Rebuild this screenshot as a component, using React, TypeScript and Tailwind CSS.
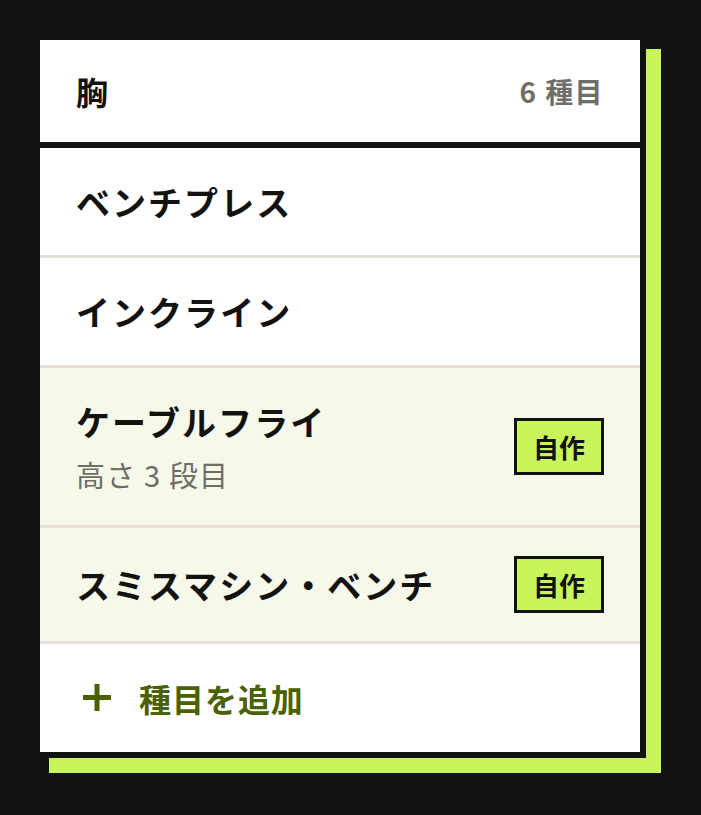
import React from 'react';

type Exercise = {
  name: string;
  note?: string;
  custom?: boolean;
};

const exercises: Exercise[] = [
  { name: 'ベンチプレス' },
  { name: 'インクライン' },
  { name: 'ケーブルフライ', note: '高さ 3 段目', custom: true },
  { name: 'スミスマシン・ベンチ', custom: true },
];

const font = { fontFamily: '"Noto Sans CJK JP", "Noto Sans", sans-serif' };

const PlusIcon = () => (
  <svg width="32" height="32" viewBox="0 0 32 32" className="text-[#4a6100]">
    <path d="M16 2v27M2 15.5h28" stroke="currentColor" strokeWidth="5" fill="none" />
  </svg>
);

export default function App() {
  return (
    <div className="min-h-[815px] bg-[#121210] p-[34px]" style={font}>
      <div className="w-[612px] border-[6px] border-[#121210] bg-white shadow-[15px_15px_0_0_#c8f55c]">
        <div className="flex h-[108px] items-center justify-between border-b-[6px] border-[#121210] px-9">
          <span className="text-[32px] font-bold text-[#121210]">胸</span>
          <span className="text-[28px] font-bold tracking-[0.05em] text-[#6f6e66]">6 種目</span>
        </div>

        {exercises.map((ex) => (
          <div
            key={ex.name}
            className={`flex items-center justify-between border-b-[3px] border-[#e5e1d6] px-9 py-7 ${
              ex.custom ? 'bg-[#f6f9ea]' : 'bg-white'
            }`}
          >
            <div className="flex flex-col">
              <span className="text-[34px] leading-[51px] font-bold tracking-[0.06em] text-[#121210]">
                {ex.name}
              </span>
              {ex.note && (
                <span className="mt-1 text-[29px] leading-[46px] tracking-[0.04em] text-[#6f6e66]">
                  {ex.note}
                </span>
              )}
            </div>
            {ex.custom && (
              <span className="flex h-[57px] w-[90px] items-center justify-center border-[3px] border-[#121210] bg-[#c8f55c] text-[26px] font-bold text-[#121210]">
                自作
              </span>
            )}
          </div>
        ))}

        <div className="flex h-[108px] items-center gap-[26px] pl-[41px]">
          <PlusIcon />
          <span className="text-[32px] font-bold tracking-[0.03em] text-[#4a6100]">種目を追加</span>
        </div>
      </div>
    </div>
  );
}
